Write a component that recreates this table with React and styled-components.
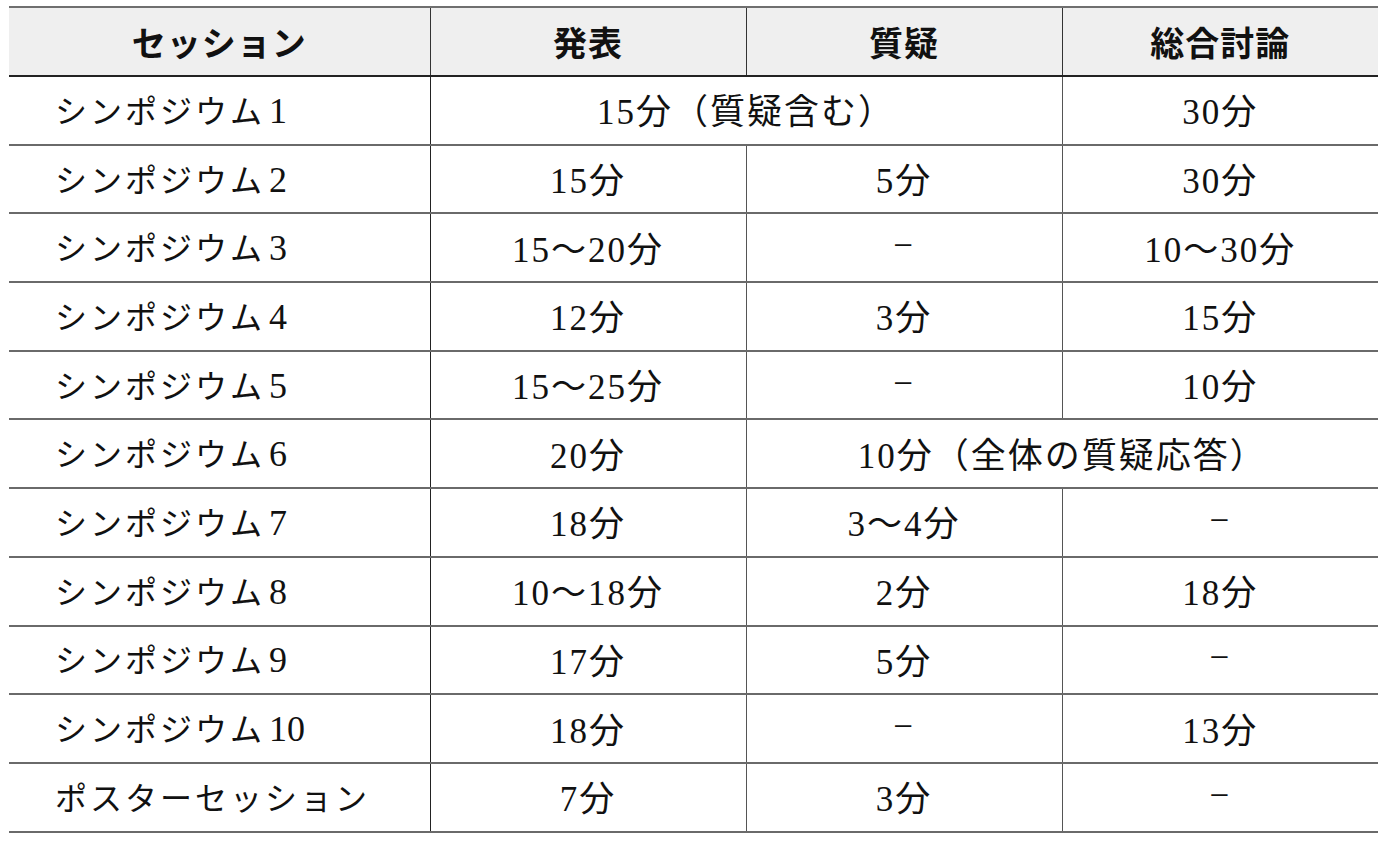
import React from 'react';
import styled, { createGlobalStyle } from 'styled-components';

const GlobalStyle = createGlobalStyle`
  html, body {
    margin:0;
    padding:0;
    background:#fff;
  }
  body{
    padding:6px 8px 0 9px;
  }
`;

const headers = ['セッション', '発表', '質疑', '総合討論'];
const colWidths = [421, 316, 316, 316];

// each row: name + cells, a cell can span columns
const rows = [
  { name: 'シンポジウム1', cells: [{ text: '15分（質疑含む）', span: 2 }, { text: '30分' }] },
  { name: 'シンポジウム2', cells: [{ text: '15分' }, { text: '5分' }, { text: '30分' }] },
  { name: 'シンポジウム3', cells: [{ text: '15〜20分' }, { text: '−' }, { text: '10〜30分' }] },
  { name: 'シンポジウム4', cells: [{ text: '12分' }, { text: '3分' }, { text: '15分' }] },
  { name: 'シンポジウム5', cells: [{ text: '15〜25分' }, { text: '−' }, { text: '10分' }] },
  { name: 'シンポジウム6', cells: [{ text: '20分' }, { text: '10分（全体の質疑応答）', span: 2 }] },
  { name: 'シンポジウム7', cells: [{ text: '18分' }, { text: '3〜4分' }, { text: '−' }] },
  { name: 'シンポジウム8', cells: [{ text: '10〜18分' }, { text: '2分' }, { text: '18分' }] },
  { name: 'シンポジウム9', cells: [{ text: '17分' }, { text: '5分' }, { text: '−' }] },
  { name: 'シンポジウム10', cells: [{ text: '18分' }, { text: '−' }, { text: '13分' }] },
  { name: 'ポスターセッション', cells: [{ text: '7分' }, { text: '3分' }, { text: '−' }] },
];

function SessionName({ name }) {
  const m = name.match(/^(.*?)(\d*)$/);
  return (
    <Styled.Name>
      {m[1]}
      {m[2] && <Styled.Num>{m[2]}</Styled.Num>}
    </Styled.Name>
  );
}

function App() {
  return (
    <>
      <GlobalStyle />
      <Styled.Table>
        <colgroup>
          {colWidths.map((w, i) => <Styled.Col key={i} $w={w} />)}
        </colgroup>
        <thead>
          <tr>
            {headers.map((h, i) => (
              <Styled.Head key={h} $last={i === headers.length - 1}>{h}</Styled.Head>
            ))}
          </tr>
        </thead>
        <tbody>
          {rows.map(row => {
            let col = 1;
            return (
              <Styled.Row key={row.name}>
                <SessionName name={row.name} />
                {row.cells.map((c, i) => {
                  const span = c.span || 1;
                  col += span;
                  return (
                    <Styled.Cell key={i} colSpan={span} $last={col === 4}>
                      {c.text}
                    </Styled.Cell>
                  );
                })}
              </Styled.Row>
            );
          })}
        </tbody>
      </Styled.Table>
    </>
  );
}

const Styled = {
  Table: styled.table`
    width:1369px;
    border-collapse:collapse;
    table-layout:fixed;
    border-top:2px solid #6f6f6f;
  `,
  Col: styled.col`
    width:${p => p.$w}px;
  `,
  Head: styled.th`
    height:67px;
    padding:0;
    background:#efefef;
    border-bottom:2px solid #222;
    border-right:${p => (p.$last ? 'none' : '1px solid #333')};
    font-family:"Noto Sans CJK JP", sans-serif;
    font-weight:700;
    font-size:34px;
    letter-spacing:1px;
    color:#111;
    text-align:center;
    vertical-align:middle;
  `,
  Row: styled.tr`
    height:68.7px;
    border-bottom:2px solid #6a6a6a;
  `,
  Name: styled.td`
    padding:0 0 3px 46px;
    border-right:1px solid #222;
    font-family:"Liberation Serif", "Noto Sans CJK JP", serif;
    font-weight:400;
    font-size:32px;
    letter-spacing:3px;
    color:#111;
    text-align:left;
    vertical-align:middle;
    white-space:nowrap;
  `,
  Num: styled.span`
    margin-left:4px;
    font-size:36px;
    letter-spacing:0;
  `,
  Cell: styled.td`
    padding:0 0 3px 0;
    border-right:${p => (p.$last ? 'none' : '1px solid #555')};
    font-family:"Liberation Serif", "Noto Sans CJK JP", serif;
    font-weight:400;
    font-size:35px;
    letter-spacing:2px;
    color:#111;
    text-align:center;
    vertical-align:middle;
    white-space:nowrap;
  `,
};

export default App;
